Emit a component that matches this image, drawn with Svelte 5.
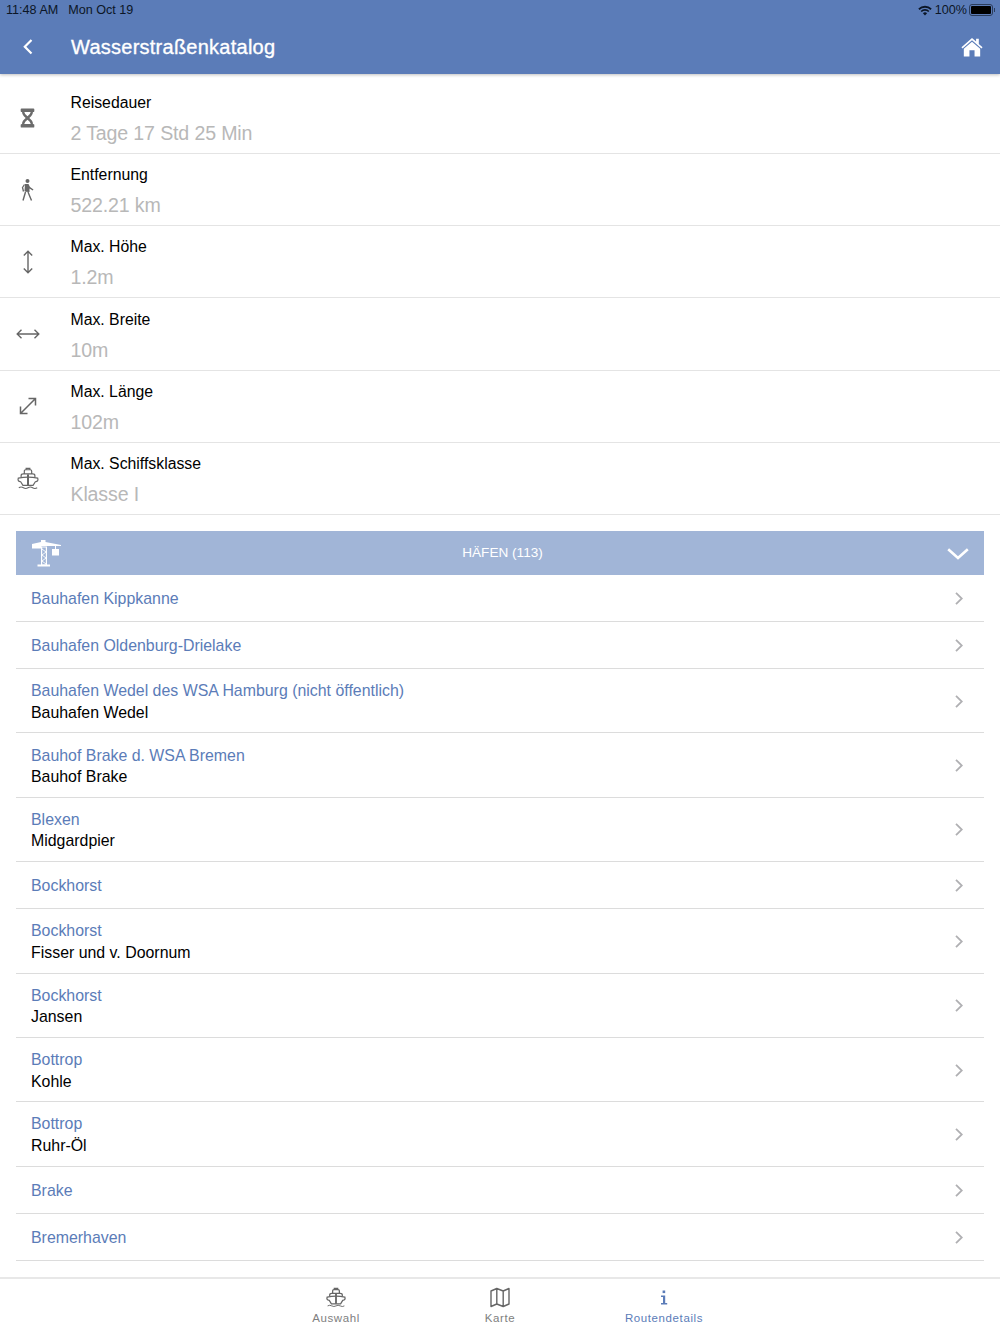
<script>
  const stats = [
    { label: 'Reisedauer', value: '2 Tage 17 Std 25 Min', icon: 'hourglass' },
    { label: 'Entfernung', value: '522.21 km', icon: 'walk' },
    { label: 'Max. Höhe', value: '1.2m', icon: 'height' },
    { label: 'Max. Breite', value: '10m', icon: 'width' },
    { label: 'Max. Länge', value: '102m', icon: 'length' },
    { label: 'Max. Schiffsklasse', value: 'Klasse I', icon: 'ship' }
  ];

  const ports = [
    { name: 'Bauhafen Kippkanne' },
    { name: 'Bauhafen Oldenburg-Drielake' },
    { name: 'Bauhafen Wedel des WSA Hamburg (nicht öffentlich)', sub: 'Bauhafen Wedel' },
    { name: 'Bauhof Brake d. WSA Bremen', sub: 'Bauhof Brake' },
    { name: 'Blexen', sub: 'Midgardpier' },
    { name: 'Bockhorst' },
    { name: 'Bockhorst', sub: 'Fisser und v. Doornum' },
    { name: 'Bockhorst', sub: 'Jansen' },
    { name: 'Bottrop', sub: 'Kohle' },
    { name: 'Bottrop', sub: 'Ruhr-Öl' },
    { name: 'Brake' },
    { name: 'Bremerhaven' },
    { name: 'Bremen' }
  ];
</script>

{#snippet ship()}
  <path d="M9 7.5 V4.5 Q9 3 10.5 3 H15.5 Q17 3 17 4.5 V7.5" fill="none" />
  <path d="M11 3 V1.5 H15 V3" fill="none" />
  <path d="M5.5 11 V9.5 Q5.5 7.5 8 7.5 H18 Q20.5 7.5 20.5 9.5 V11" fill="none" />
  <path d="M2.5 12 Q13 10 23.5 12 Q24.8 15.6 21 16 L18.5 20 H7.5 L5 16 Q1.2 15.6 2.5 12 Z" fill="none" />
  <path d="M13 8 V20" fill="none" stroke-width="2.2" />
  <path d="M3 22.5 Q5.5 21 8 22.5 T13 22.5 T18 22.5 T23 22.5" fill="none" stroke-width="1.1" />
{/snippet}

<div class="page">
  <header class="top">
    <div class="status">
      <span class="time">11:48 AM</span>
      <span class="date">Mon Oct 19</span>
      <span class="spacer"></span>
      <svg class="wifi" width="14" height="11" viewBox="0 0 14 11">
        <path d="M0.3 3.6 A9.5 9.5 0 0 1 13.7 3.6 L12.5 4.9 A7.8 7.8 0 0 0 1.5 4.9 Z" />
        <path d="M2.6 5.9 A6.2 6.2 0 0 1 11.4 5.9 L10.2 7.1 A4.5 4.5 0 0 0 3.8 7.1 Z" />
        <path d="M4.9 8.2 A3 3 0 0 1 9.1 8.2 L7 10.4 Z" />
      </svg>
      <span class="pct">100%</span>
      <span class="battery"><span class="level"></span></span>
      <span class="nub"></span>
    </div>
    <div class="nav">
      <svg class="back" width="12" height="18" viewBox="0 0 12 18">
        <path d="M9.5 2 L2.8 8.8 L9.5 15.6" fill="none" stroke="#fff" stroke-width="2.2" />
      </svg>
      <h1>Wasserstraßenkatalog</h1>
      <svg class="home" width="22" height="20" viewBox="0 0 24 22">
        <path d="M12 1 L16.5 5 V2 H19.5 V7.8 L23.6 11.4 L22.4 12.7 L12 3.6 L1.6 12.7 L0.4 11.4 Z" fill="#fff" />
        <path d="M12 5.2 L21 13 V21.5 H14.8 V14.5 H9.2 V21.5 H3 V13 Z" fill="#fff" />
      </svg>
    </div>
  </header>

  <section class="stats">
    {#each stats as s}
      <div class="stat">
        <div class="stat_icon">
          {#if s.icon === 'hourglass'}
            <svg width="15" height="20" viewBox="0 0 16 22">
              <path d="M0.5 1.5 Q0.5 0.5 1.5 0.5 H14.5 Q15.5 0.5 15.5 1.5 V3.5 Q15.5 4.5 14 4.5 Q14 8 10 11 Q14 14 14 17.5 Q15.5 17.5 15.5 18.5 V20.5 Q15.5 21.5 14.5 21.5 H1.5 Q0.5 21.5 0.5 20.5 V18.5 Q0.5 17.5 2 17.5 Q2 14 6 11 Q2 8 2 4.5 Q0.5 4.5 0.5 3.5 Z M4.5 4.5 Q4.8 7 8 9 Q11.2 7 11.5 4.5 Z M4.4 17.5 H11.6 Q11 15 8 13 Q5 15 4.4 17.5 Z" fill="#6b6b6b" fill-rule="evenodd" />
            </svg>
          {:else if s.icon === 'walk'}
            <svg width="14" height="22" viewBox="0 0 14 22">
              <circle cx="6.5" cy="2" r="2" fill="#666" />
              <path d="M4 5 H7.5 L9 8 L12.5 10.5 L11.7 11.6 L8.5 9.6 V13 L4.5 12.8 L3.5 12 Z" fill="#666" />
              <path d="M4.5 13 L2 21.5 M7 13 L10.5 21.5" stroke="#666" stroke-width="1.4" fill="none" />
              <path d="M3.5 5.5 L1.5 8.5 L2.5 12.5" stroke="#666" stroke-width="1.3" fill="none" />
            </svg>
          {:else if s.icon === 'height'}
            <svg width="12" height="24" viewBox="0 0 12 24">
              <path d="M6 1.5 V22.5 M1.8 5.5 L6 1.2 L10.2 5.5 M1.8 18.5 L6 22.8 L10.2 18.5" fill="none" stroke="#666" stroke-width="1.4" />
            </svg>
          {:else if s.icon === 'width'}
            <svg width="24" height="12" viewBox="0 0 24 12">
              <path d="M1.5 6 H22.5 M5.5 1.8 L1.2 6 L5.5 10.2 M18.5 1.8 L22.8 6 L18.5 10.2" fill="none" stroke="#666" stroke-width="1.4" />
            </svg>
          {:else if s.icon === 'length'}
            <svg width="18" height="18" viewBox="0 0 18 18">
              <path d="M1.5 16.5 L16.5 1.5 M1.5 9.5 V16.5 H8.5 M9.5 1.5 H16.5 V8.5" fill="none" stroke="#666" stroke-width="1.5" />
            </svg>
          {:else}
            <svg width="24" height="23" viewBox="0 0 26 25" stroke="#666" stroke-width="1.3">
              {@render ship()}
            </svg>
          {/if}
        </div>
        <div class="stat_text">
          <div class="stat_label">{s.label}</div>
          <div class="stat_value">{s.value}</div>
        </div>
      </div>
    {/each}
  </section>

  <section class="ports">
    <div class="ports_head">
      <svg class="crane" width="30" height="28" viewBox="0 0 30 28">
        <path d="M0 5 L9 3 V1 H13.5 V3 L29 6 V7 H9.5 V9.5 H0 Z" fill="#fff" />
        <path d="M9.6 8 H14.4 V26 H9.6 Z" fill="none" stroke="#fff" stroke-width="1.2" />
        <path d="M10 10 L14 13 L10 16 L14 19 L10 22 L14 25" fill="none" stroke="#fff" stroke-width="0.9" />
        <path d="M5.5 25.5 H18 V27.5 H5.5 Z" fill="#fff" />
        <path d="M23.5 7 V10" stroke="#fff" stroke-width="1" />
        <path d="M20 10 H27 V16.5 H20 Z" fill="#fff" />
      </svg>
      <span class="ports_title">HÄFEN (113)</span>
      <svg class="chev_down" width="22" height="12" viewBox="0 0 22 12">
        <path d="M1.2 1.2 L11 10 L20.8 1.2" fill="none" stroke="#fff" stroke-width="2.6" />
      </svg>
    </div>
    {#each ports as p}
      <div class="port" class:double={p.sub}>
        <div class="port_text">
          <div class="port_name">{p.name}</div>
          {#if p.sub}<div class="port_sub">{p.sub}</div>{/if}
        </div>
        <svg class="port_chev" width="8" height="13" viewBox="0 0 8 13">
          <path d="M1 0.8 L6.8 6.5 L1 12.2" fill="none" stroke="#b0b0b3" stroke-width="1.8" />
        </svg>
      </div>
    {/each}
  </section>

  <nav class="tabs">
    <div class="tab">
      <svg width="22" height="21" viewBox="0 0 26 25" stroke="#666" stroke-width="1.5">
        {@render ship()}
      </svg>
      <span>Auswahl</span>
    </div>
    <div class="tab">
      <svg width="20" height="21" viewBox="0 0 20 20">
        <path d="M1 3.5 L6.8 1 L13.2 3.5 L19 1 V16.5 L13.2 19 L6.8 16.5 L1 19 Z M6.8 1 V16.5 M13.2 3.5 V19" fill="none" stroke="#666" stroke-width="1.4" stroke-linejoin="round" />
      </svg>
      <span>Karte</span>
    </div>
    <div class="tab active">
      <svg width="20" height="21" viewBox="0 0 20 20">
        <rect x="8.6" y="3" width="2.6" height="2.6" fill="#5b7cb8" />
        <path d="M7 8 H11.2 V15.6 H13.2 V17 H7 V15.6 H9 V9.4 H7 Z" fill="#5b7cb8" />
      </svg>
      <span>Routendetails</span>
    </div>
  </nav>
</div>

<style>
  :global(body) {
    margin: 0;
    background: #fff;
  }

  .page {
    position: relative;
    height: 1334px;
    overflow: hidden;
    font-family: "Liberation Sans", Arial, sans-serif;
    color: #000;
  }

  .top {
    height: 74px;
    background: #5b7cb8;
    box-shadow: 0 1px 3px rgba(0 0 0 / 0.25);
    position: relative;
  }

  .status {
    height: 20px;
    display: flex;
    align-items: center;
    padding: 0 5px 0 6px;
    font-size: 12.6px;
    color: #0c1626;
  }

  .date {
    margin-left: 10px;
  }

  .spacer {
    flex: 1;
  }

  .wifi {
    fill: #0c1626;
    margin-right: 3px;
  }

  .battery {
    width: 20px;
    height: 8px;
    margin-left: 2px;
    padding: 1px;
    border: 1px solid #2b3d5c;
    border-radius: 3px;
    display: flex;
  }

  .level {
    flex: 1;
    background: #000;
    border-radius: 1px;
  }

  .nub {
    width: 1.5px;
    height: 4px;
    margin-left: 0.5px;
    background: #2b3d5c;
  }

  .nav {
    height: 54px;
    display: flex;
    align-items: center;
    padding: 0 17px 0 22px;
  }

  .back {
    margin-right: 37px;
  }

  h1 {
    flex: 1;
    margin: 0;
    font-size: 20px;
    font-weight: 400;
    letter-spacing: 0.25px;
    color: #fff;
    -webkit-text-stroke: 0.35px #fff;
  }

  .stats {
    padding-top: 1px;
  }

  .stat {
    box-sizing: border-box;
    height: 72.2px;
    display: flex;
    border-bottom: 1px solid #e4e4e4;
  }

  .stat:first-child {
    height: 79px;
  }

  .stat:first-child .stat_icon {
    padding-top: 7px;
  }

  .stat_icon {
    width: 55px;
    flex: none;
    display: flex;
    align-items: center;
    justify-content: center;
  }

  .stat_text {
    display: flex;
    flex-direction: column;
    justify-content: flex-end;
    padding-left: 15.5px;
    padding-bottom: 8px;
    gap: 8px;
  }

  .stat_label {
    font-size: 15.8px;
    line-height: 20px;
  }

  .stat_value {
    font-size: 19.6px;
    line-height: 24px;
    letter-spacing: -0.15px;
    color: #b8b8b8;
  }

  .ports {
    margin: 16px 16px 0;
  }

  .ports_head {
    height: 44px;
    position: relative;
    display: flex;
    align-items: center;
    justify-content: center;
    background: #a1b5d7;
  }

  .crane {
    position: absolute;
    left: 16px;
    top: 8px;
  }

  .chev_down {
    position: absolute;
    right: 15px;
    top: 17px;
  }

  .ports_title {
    font-size: 13.6px;
    color: #fff;
    margin-left: 5px;
  }

  .port {
    min-height: 46px;
    padding-left: 15px;
    padding-right: 21px;
    display: flex;
    align-items: center;
    justify-content: space-between;
    border-bottom: 1px solid #dcdcdc;
  }

  .port.double {
    min-height: 63.4px;
  }

  .port_text {
    padding-top: 2px;
  }

  .port_chev {
    margin-top: 1px;
  }

  .port_name {
    font-size: 15.9px;
    line-height: 21.5px;
    color: #5b7cb8;
  }

  .port_sub {
    font-size: 15.9px;
    line-height: 21.5px;
  }

  .tabs {
    position: absolute;
    left: 0;
    right: 0;
    bottom: 0;
    height: 55px;
    background: #fff;
    border-top: 2px solid #e8e8e8;
    display: grid;
    grid-template-columns: repeat(3, 164px);
    justify-content: center;
    color: #808080;
  }

  .tab {
    display: flex;
    flex-direction: column;
    align-items: center;
    padding-top: 8px;
    gap: 3px;
    font-size: 11.5px;
    letter-spacing: 0.6px;
  }

  .tab span {
    line-height: 14px;
  }

  .tab.active {
    color: #5b7cb8;
  }
</style>
